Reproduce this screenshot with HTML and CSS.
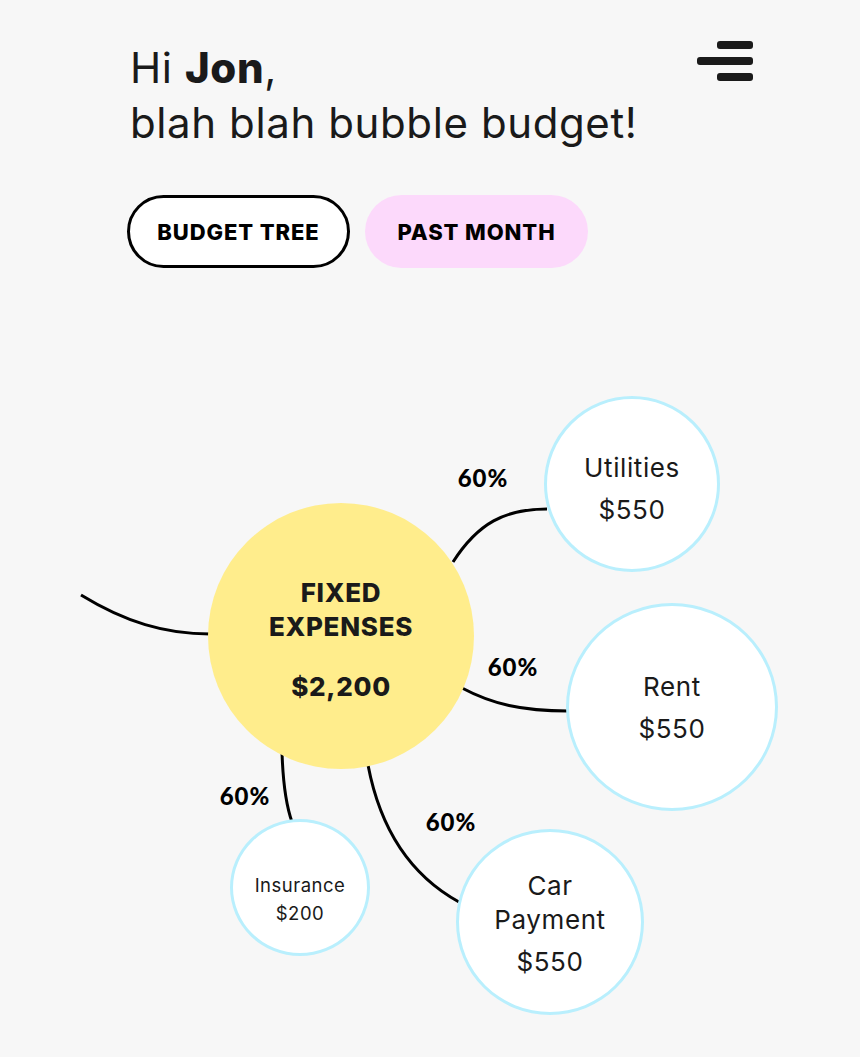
FILE: index.html
```html
<!DOCTYPE html>
<html>
<head>
<meta charset="utf-8">
<link rel="stylesheet" href="styles.css">
</head>
<body>
<div class="page">
  <header class="header">
    <h1 class="title">Hi <strong>Jon</strong>,<br>blah blah bubble budget!</h1>
    <button class="menu" aria-label="menu">
      <span class="bar short"></span>
      <span class="bar long"></span>
      <span class="bar short"></span>
    </button>
  </header>
  <nav class="tabs">
    <button class="tab tab-outline">BUDGET TREE</button>
    <button class="tab tab-pink">PAST MONTH</button>
  </nav>
  <section class="diagram">
    <svg class="links" viewBox="0 300 860 757" width="860" height="757">
      <g fill="none" stroke="#000" stroke-width="3" stroke-linecap="butt">
        <path d="M81 595 C 125 622 165 634 210 634"/>
        <path d="M453 562 C 478 523 505 509 547 509"/>
        <path d="M462 688 C 492 704 522 711 568 711"/>
        <path d="M282 752 C 283 785 286 805 292 822"/>
        <path d="M368 765 C 380 828 410 875 459 902"/>
      </g>
    </svg>
    <div class="node main n-main">
      <span class="main-name">FIXED<br>EXPENSES</span>
      <span class="main-amount">$2,200</span>
    </div>
    <div class="node sub n-util">
      <span>Utilities</span>
      <span>$550</span>
    </div>
    <div class="node sub n-rent">
      <span>Rent</span>
      <span>$550</span>
    </div>
    <div class="node sub n-car">
      <span class="car-name">Car<br>Payment</span>
      <span>$550</span>
    </div>
    <div class="node sub small n-ins">
      <span>Insurance</span>
      <span>$200</span>
    </div>
    <span class="pct p1">60%</span>
    <span class="pct p2">60%</span>
    <span class="pct p3">60%</span>
    <span class="pct p4">60%</span>
  </section>
</div>
</body>
</html>
```
FILE: styles.css
```css
* { box-sizing: border-box; }
html, body {
  margin: 0;
  padding: 0;
  background: #f7f7f7;
}
body {
  font-family: Inter, "Liberation Sans", sans-serif;
  color: #1a1a1a;
}
.page {
  width: 860px;
  height: 1057px;
  overflow: hidden;
}
.header {
  display: flex;
  justify-content: space-between;
  align-items: flex-start;
  padding: 40px 107px 0 130px;
}
.title {
  margin: 0;
  font-size: 42px;
  font-weight: 400;
  line-height: 55px;
  letter-spacing: 0.6px;
}
.title strong { font-weight: 800; }
.menu {
  display: flex;
  flex-direction: column;
  align-items: flex-end;
  gap: 8px;
  margin-top: 1px;
  padding: 0;
  border: 0;
  background: none;
}
.bar {
  display: block;
  height: 8px;
  border-radius: 3px;
  background: #1a1a1a;
}
.bar.short { width: 36px; }
.bar.long { width: 56px; }
.tabs {
  display: flex;
  gap: 15px;
  padding: 45px 0 0 127px;
}
.tab {
  width: 223px;
  height: 73px;
  border-radius: 37px;
  font-family: Inter, "Liberation Sans", sans-serif;
  font-weight: 800;
  font-size: 22px;
  letter-spacing: 0.9px;
  color: #000;
  padding: 0;
}
.tab-outline {
  background: #fff;
  border: 3px solid #000;
}
.tab-pink {
  background: #fcd9fb;
  border: 0;
}
.diagram {
  position: relative;
  margin-top: 32px;
  width: 860px;
  height: 757px;
}
.links {
  position: absolute;
  left: 0;
  top: 0;
}
.node {
  position: absolute;
  border-radius: 50%;
  display: flex;
  flex-direction: column;
  align-items: center;
  justify-content: center;
  text-align: center;
}
.main {
  background: #ffed8c;
  width: 266px;
  height: 266px;
  left: 208px;
  top: 203px;
  padding-top: 8px;
  font-weight: 800;
  font-size: 26px;
  letter-spacing: 0.7px;
  color: #1a1a1a;
}
.main-name { line-height: 34px; }
.main-amount { margin-top: 26px; line-height: 34px; }
.sub {
  background: #fff;
  border: 3px solid #b9effd;
  font-size: 26px;
  letter-spacing: 0.6px;
  line-height: 42px;
  color: #1a1a1a;
}
.n-util { width: 176px; height: 176px; left: 544px; top: 96px; padding-top: 10px; }
.n-rent { width: 212px; height: 208px; left: 566px; top: 303px; padding-top: 2px; }
.n-car { width: 188px; height: 186px; left: 456px; top: 529px; padding-top: 8px; }
.car-name { line-height: 34px; margin-bottom: 4px; }
.n-ins {
  width: 140px; height: 137px; left: 230px; top: 519px;
  font-size: 18.5px; letter-spacing: 0.5px; line-height: 28px; padding-top: 22px;
}
.pct {
  position: absolute;
  font-family: Lato, "Liberation Sans", sans-serif;
  font-weight: 900;
  font-size: 24px;
  letter-spacing: 1px;
  color: #000;
  transform: translate(-50%, -50%);
}
.p1 { left: 483px; top: 177px; }
.p2 { left: 513px; top: 366px; }
.p3 { left: 245px; top: 495px; }
.p4 { left: 451px; top: 521px; }
```
